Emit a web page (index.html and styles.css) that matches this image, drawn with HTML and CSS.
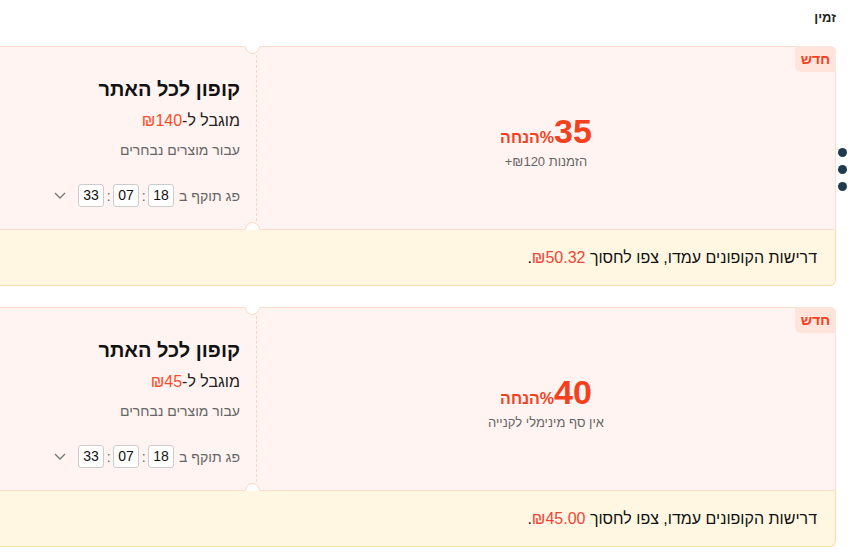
FILE: index.html
```html
<!DOCTYPE html>
<html lang="he" dir="rtl">
<head>
<meta charset="utf-8">
<title>קופונים</title>
<link rel="stylesheet" href="styles.css">
</head>
<body>
<div class="page">
  <div class="header">זמין</div>

  <div class="card">
    <div class="coupon">
      <span class="badge">חדש</span>
      <div class="value">
        <div class="amount"><span class="num">35</span><span class="unit">%הנחה</span></div>
        <div class="cond">הזמנות ₪120+</div>
      </div>
      <div class="details">
        <div class="title">קופון לכל האתר</div>
        <div class="limit">מוגבל ל-<span class="red">₪140</span></div>
        <div class="for">עבור מוצרים נבחרים</div>
        <div class="timer">
          <span class="label">פג תוקף ב</span>
          <span class="box">18</span><span class="colon">:</span>
          <span class="box">07</span><span class="colon">:</span>
          <span class="box">33</span>
          <svg class="chev" width="12" height="7" viewBox="0 0 12 7"><path d="M1 1 L6 6 L11 1" fill="none" stroke="#777" stroke-width="1.4"/></svg>
        </div>
      </div>
    </div>
    <div class="footer">דרישות הקופונים עמדו, צפו לחסוך <span class="save">₪50.32</span>.</div>
  </div>

  <div class="card">
    <div class="coupon">
      <span class="badge">חדש</span>
      <div class="value">
        <div class="amount"><span class="num">40</span><span class="unit">%הנחה</span></div>
        <div class="cond">אין סף מינימלי לקנייה</div>
      </div>
      <div class="details">
        <div class="title">קופון לכל האתר</div>
        <div class="limit">מוגבל ל-<span class="red">₪45</span></div>
        <div class="for">עבור מוצרים נבחרים</div>
        <div class="timer">
          <span class="label">פג תוקף ב</span>
          <span class="box">18</span><span class="colon">:</span>
          <span class="box">07</span><span class="colon">:</span>
          <span class="box">33</span>
          <svg class="chev" width="12" height="7" viewBox="0 0 12 7"><path d="M1 1 L6 6 L11 1" fill="none" stroke="#777" stroke-width="1.4"/></svg>
        </div>
      </div>
    </div>
    <div class="footer">דרישות הקופונים עמדו, צפו לחסוך <span class="save">₪45.00</span>.</div>
  </div>

  <div class="dots"><span></span><span></span><span></span></div>
</div>
</body>
</html>
```

FILE: styles.css
```css
html, body {
  margin: 0;
  padding: 0;
  background: #fff;
  overflow: hidden;
}
body {
  direction: rtl;
  font-family: "Liberation Sans", Arial, sans-serif;
  color: #222;
}
.page {
  position: relative;
  padding: 8px 18px 0 0;
}
.header {
  font-size: 13px;
  font-weight: bold;
  line-height: 20px;
  color: #222;
}
.card {
  margin-left: -40px;
  margin-top: 18px;
}
.card + .card {
  margin-top: 21px;
}
.coupon {
  position: relative;
  display: flex;
  height: 184px;
  box-sizing: border-box;
  background: #fff4f1;
  border: 1px solid #fddccb;
  border-radius: 6px 6px 0 0;
}
.coupon::before,
.coupon::after {
  content: "";
  position: absolute;
  left: 284px;
  width: 13px;
  height: 13px;
  border-radius: 50%;
  background: #fff;
  border: 1px solid #fbd9c8;
  transform: rotate(45deg);
}
.coupon::before {
  top: -8px;
  border-color: transparent #fbd9c8 #fbd9c8 transparent;
}
.coupon::after {
  bottom: -8px;
  border-color: #fbd9c8 transparent transparent #fbd9c8;
}
.badge {
  position: absolute;
  top: -1px;
  right: -1px;
  height: 26px;
  line-height: 26px;
  padding: 0 6px;
  background: #ffe4dc;
  color: #f2401c;
  font-weight: bold;
  font-size: 14px;
  border-radius: 0 6px 0 6px;
}
.value {
  flex: 1;
  display: flex;
  flex-direction: column;
  align-items: center;
  justify-content: center;
  padding-top: 4px;
}
.amount {
  display: flex;
  align-items: baseline;
  color: #f5401e;
  font-weight: bold;
}
.num {
  font-size: 34px;
  line-height: 38px;
}
.unit {
  font-size: 16px;
}
.cond {
  font-size: 13px;
  color: #666;
  margin-top: 4px;
}
.details {
  width: 279px;
  margin: 8px 0;
  padding: 22px 16px 0 0;
  border-right: 1px dashed #f6d4c6;
}
.title {
  font-size: 20px;
  font-weight: bold;
  line-height: 24px;
  color: #111;
}
.limit {
  font-size: 16px;
  line-height: 20px;
  margin-top: 10px;
  color: #222;
}
.red {
  color: #fa4d2c;
}
.for {
  font-size: 14px;
  line-height: 18px;
  margin-top: 10px;
  color: #666;
}
.timer {
  display: flex;
  align-items: center;
  margin-top: 25px;
  font-size: 14px;
  color: #666;
}
.label {
  margin-left: 5px;
}
.box {
  width: 24px;
  height: 21px;
  line-height: 21px;
  text-align: center;
  border: 1px solid #ccc;
  border-radius: 3px;
  background: #fff;
  color: #111;
  font-size: 14px;
}
.colon {
  width: 9px;
  text-align: center;
  color: #666;
}
.chev {
  margin-right: 12px;
}
.footer {
  position: relative;
  height: 56px;
  line-height: 55px;
  box-sizing: border-box;
  padding-right: 18px;
  background: #fff7e1;
  border: 1px solid #f7e0a8;
  border-top: none;
  border-radius: 0 0 6px 6px;
  font-size: 16px;
  color: #111;
}
.save {
  color: #ef4438;
}
.dots {
  position: absolute;
  top: 148px;
  right: 7px;
  display: flex;
  flex-direction: column;
  gap: 8px;
}
.dots span {
  display: block;
  width: 9px;
  height: 9px;
  border-radius: 50%;
  background: #1f3b4c;
}
```
